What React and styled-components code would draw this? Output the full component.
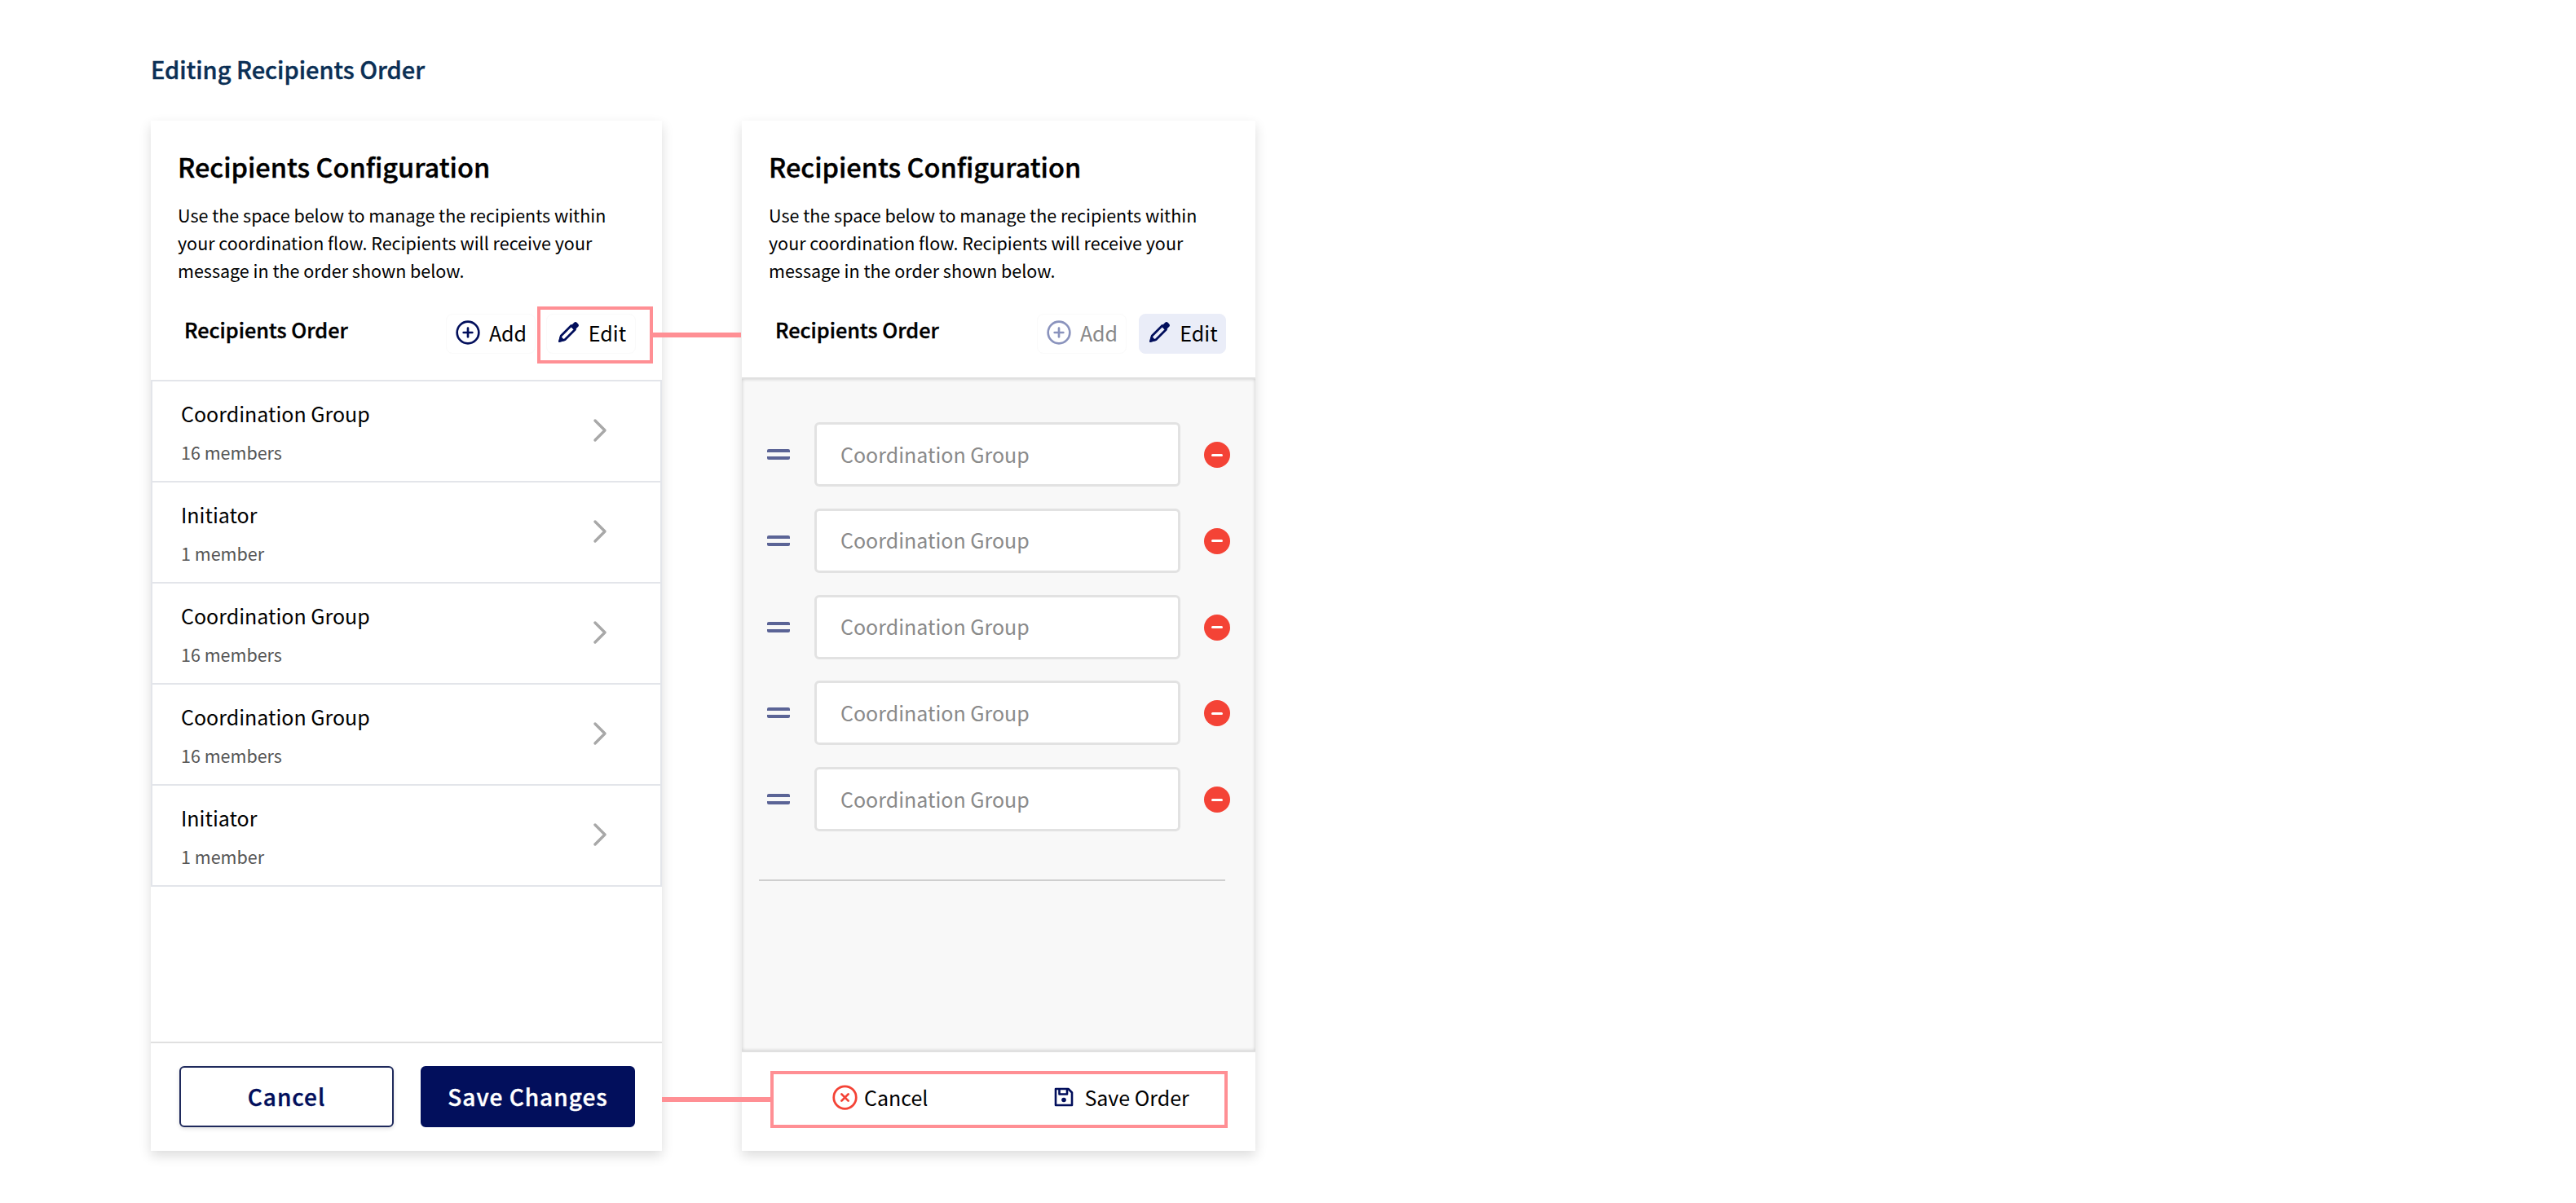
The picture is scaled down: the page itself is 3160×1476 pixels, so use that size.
import styled, { createGlobalStyle, css } from "styled-components";
import { ChevronRight, CirclePlus, CircleX } from "lucide-react";

const NAVY = "#020f5c";
const PINK = "#ff8f94";

// only Medium and Bold are installed, this gets Medium close to a semibold
const semibold = css`
  font-weight: 500;
  -webkit-text-stroke: 0.4px currentColor;
`;

const GlobalStyle = createGlobalStyle`
  html, body { margin: 0; padding: 0; background: #fff; }
  body { font-family: "Noto Sans CJK JP", "Noto Sans", sans-serif; color: #000; }
`;

const Page = styled.div`
  position: relative;
  width: 3160px;
  height: 1476px;
  padding: 64px 0 0 185px;
  box-sizing: border-box;
`;

const PageTitle = styled.h1`
  margin: 0 0 44px;
  font-size: 29px;
  line-height: 40px;
  color: #0b2f55;
  ${semibold}
`;

const Cards = styled.div`
  display: flex;
  gap: 98px;
`;

const Card = styled.section`
  display: flex;
  flex-direction: column;
  width: ${(p) => p.$width}px;
  height: 1264px;
  background: #fff;
  box-shadow: 0 6px 14px rgba(0, 0, 0, 0.14);
`;

const Header = styled.div`
  padding: 34px 33px 0;
`;

const Heading = styled.h2`
  margin: 0 0 21px;
  font-size: 32.5px;
  line-height: 44px;
  ${semibold}
`;

const Description = styled.p`
  margin: 0;
  font-size: 21.5px;
  line-height: 34px;
`;

const Toolbar = styled.div`
  display: flex;
  justify-content: space-between;
  margin-top: 36px;
  padding: 0 ${(p) => p.$right}px ${(p) => p.$bottom}px 41px;
`;

const OrderLabel = styled.h3`
  margin: -1px 0 0;
  font-size: 25.2px;
  line-height: 40px;
  ${semibold}
`;

const ToolButtons = styled.div`
  display: flex;
  gap: ${(p) => p.$gap}px;
`;

const ToolButton = styled.div`
  display: flex;
  align-items: center;
  justify-content: center;
  gap: 10px;
  width: ${(p) => (p.$active ? 107 : 110)}px;
  height: 49px;
  box-sizing: border-box;
  padding-bottom: 3px;
  border-radius: 8px;
  border: 1px solid ${(p) => (p.$active ? "#eaedf8" : "#fafafa")};
  background: ${(p) => (p.$active ? "#eaedf8" : "#fff")};
  color: ${(p) => (p.$muted ? "#888" : "#000")};
  font-size: 25px;
  line-height: 40px;
`;

const RecipientList = styled.ul`
  margin: 0;
  padding: 0;
  list-style: none;
  border: solid #e3e5ea;
  border-width: 2px 2px 0;
`;

const RecipientRow = styled.li`
  display: flex;
  align-items: center;
  justify-content: space-between;
  height: 124px;
  box-sizing: border-box;
  padding: 0 50px 0 35px;
  border-bottom: 2px solid #e3e5ea;
`;

const RowName = styled.div`
  font-size: 25px;
  line-height: 40px;
  margin-top: -1px;
`;

const RowMeta = styled.div`
  margin-top: 12px;
  font-size: 21.5px;
  line-height: 32px;
  color: #555;
`;

const RowChevron = styled(ChevronRight)`
  margin-top: -3px;
`;

const Filler = styled.div`
  flex: 1;
`;

const Footer = styled.div`
  display: flex;
  gap: 33px;
  height: 134px;
  box-sizing: border-box;
  padding: 28px 0 0 35px;
  border-top: 2px solid #e0e0e0;
`;

const FooterButton = styled.div`
  display: flex;
  align-items: center;
  justify-content: center;
  width: 263px;
  height: 75px;
  box-sizing: border-box;
  padding-bottom: 2px;
  border-radius: 6px;
  border: 2px solid ${(p) => (p.$primary ? NAVY : "#1f2a5c")};
  background: ${(p) => (p.$primary ? NAVY : "#fff")};
  color: ${(p) => (p.$primary ? "#fff" : NAVY)};
  box-shadow: ${(p) => (p.$primary ? "none" : "0 2px 5px rgba(0, 0, 0, 0.12)")};
  font-size: 28px;
  letter-spacing: 1px;
  ${semibold}
`;

const EditPanel = styled.div`
  flex: 1;
  padding: 53px 0 0 31px;
  background: #f8f8f8;
  box-shadow: inset 0 0 4px rgba(0, 0, 0, 0.2);
  border-top: 2px solid #e0e0e0;
  border-bottom: 2px solid #e0e0e0;
`;

const EditRows = styled.div`
  display: flex;
  flex-direction: column;
  gap: 26.75px;
`;

const EditRow = styled.div`
  display: flex;
  align-items: center;
`;

const DragHandle = styled.div`
  width: 28px;
  height: 13px;
  margin-right: 30px;
  border-top: 4px solid #5b6496;
  border-bottom: 4px solid #5b6496;
  border-radius: 2px;
  box-sizing: border-box;
`;

const NameInput = styled.div`
  display: flex;
  align-items: center;
  width: 449px;
  height: 79px;
  box-sizing: border-box;
  padding: 0 0 2px 29px;
  margin-right: 29px;
  background: #fff;
  border: 3px solid #e2e2e2;
  border-radius: 6px;
  color: #8a8a8a;
  font-size: 25px;
`;

const RemoveButton = styled.div`
  display: flex;
  align-items: center;
  justify-content: center;
  width: 32px;
  height: 32px;
  margin-top: 1px;
  border-radius: 50%;
  background: #f44336;

  &::before {
    content: "";
    width: 14px;
    height: 3px;
    border-radius: 2px;
    background: #fff;
  }
`;

const PanelDivider = styled.hr`
  width: 572px;
  height: 2px;
  margin: 59px 0 0 -10px;
  border: 0;
  background: #cfcfcf;
`;

const OrderFooter = styled.div`
  display: flex;
  align-items: center;
  gap: 155px;
  height: 121px;
  box-sizing: border-box;
  padding: 0 0 11px 110px;
`;

const OrderAction = styled.div`
  display: flex;
  align-items: center;
  gap: ${(p) => p.$gap}px;
  font-size: 25px;
  line-height: 40px;
`;

const Highlight = styled.div`
  position: absolute;
  left: ${(p) => p.$left}px;
  top: ${(p) => p.$top}px;
  width: ${(p) => p.$width}px;
  height: ${(p) => p.$height}px;
  box-sizing: border-box;
  border: 4px solid ${PINK};
`;

const Connector = styled.div`
  position: absolute;
  left: ${(p) => p.$left}px;
  top: ${(p) => p.$top}px;
  width: ${(p) => p.$width}px;
  height: 6px;
  background: ${PINK};
`;

function PencilIcon() {
  return (
    <svg width="30" height="30" viewBox="0 0 24 24" fill="none">
      <path d="M3.6 20.4 5 15.2 15 5.2l3.8 3.8-10 10z" stroke={NAVY} strokeWidth="2.2" strokeLinejoin="round" />
      <path d="M14.2 5.8l3.4-3.4a2.2 2.2 0 0 1 3.1 0l.9.9a2.2 2.2 0 0 1 0 3.1l-3.4 3.4zM2.4 21.6l1.7-6.6 4.9 4.9z" fill={NAVY} />
    </svg>
  );
}

function SaveIcon() {
  return (
    <svg width="24" height="24" viewBox="0 0 24 24" fill="none" stroke={NAVY} strokeWidth="2.6" strokeLinejoin="round">
      <path d="M2 2h15.5L22 6.5V22H2z" />
      <path d="M6.5 2v6.5h9.5V2" />
      <circle cx="12" cy="15.5" r="2.8" fill={NAVY} stroke="none" />
    </svg>
  );
}

const recipients = [
  { name: "Coordination Group", meta: "16 members" },
  { name: "Initiator", meta: "1 member" },
  { name: "Coordination Group", meta: "16 members" },
  { name: "Coordination Group", meta: "16 members" },
  { name: "Initiator", meta: "1 member" },
];

const intro =
  "Use the space below to manage the recipients within your coordination flow. Recipients will receive your message in the order shown below.";

export default function App() {
  return (
    <Page>
      <GlobalStyle />
      <PageTitle>Editing Recipients Order</PageTitle>
      <Cards>
        <Card $width={627}>
          <Header>
            <Heading>Recipients Configuration</Heading>
            <Description>{intro}</Description>
          </Header>
          <Toolbar $right={32} $bottom={32}>
            <OrderLabel>Recipients Order</OrderLabel>
            <ToolButtons $gap={13}>
              <ToolButton>
                <CirclePlus size={32} color={NAVY} strokeWidth={2} />
                Add
              </ToolButton>
              <ToolButton>
                <PencilIcon />
                Edit
              </ToolButton>
            </ToolButtons>
          </Toolbar>
          <RecipientList>
            {recipients.map((r, i) => (
              <RecipientRow key={i}>
                <div>
                  <RowName>{r.name}</RowName>
                  <RowMeta>{r.meta}</RowMeta>
                </div>
                <RowChevron size={48} color="#a8a8a8" strokeWidth={1.7} />
              </RecipientRow>
            ))}
          </RecipientList>
          <Filler />
          <Footer>
            <FooterButton>Cancel</FooterButton>
            <FooterButton $primary>Save Changes</FooterButton>
          </Footer>
        </Card>

        <Card $width={630}>
          <Header>
            <Heading>Recipients Configuration</Heading>
            <Description>{intro}</Description>
          </Header>
          <Toolbar $right={36} $bottom={29}>
            <OrderLabel>Recipients Order</OrderLabel>
            <ToolButtons $gap={15}>
              <ToolButton $muted>
                <CirclePlus size={32} color="#8a93bd" strokeWidth={2} />
                Add
              </ToolButton>
              <ToolButton $active>
                <PencilIcon />
                Edit
              </ToolButton>
            </ToolButtons>
          </Toolbar>
          <EditPanel>
            <EditRows>
              {recipients.map((r, i) => (
                <EditRow key={i}>
                  <DragHandle />
                  <NameInput>Coordination Group</NameInput>
                  <RemoveButton />
                </EditRow>
              ))}
            </EditRows>
            <PanelDivider />
          </EditPanel>
          <OrderFooter>
            <OrderAction $gap={7}>
              <CircleX size={33} color="#f44336" strokeWidth={2} />
              Cancel
            </OrderAction>
            <OrderAction $gap={13}>
              <SaveIcon />
              Save Order
            </OrderAction>
          </OrderFooter>
        </Card>
      </Cards>

      <Highlight $left={659} $top={376} $width={142} $height={70} />
      <Connector $left={801} $top={408} $width={108} />
      <Highlight $left={945} $top={1314} $width={561} $height={70} />
      <Connector $left={812} $top={1346} $width={133} />
    </Page>
  );
}
